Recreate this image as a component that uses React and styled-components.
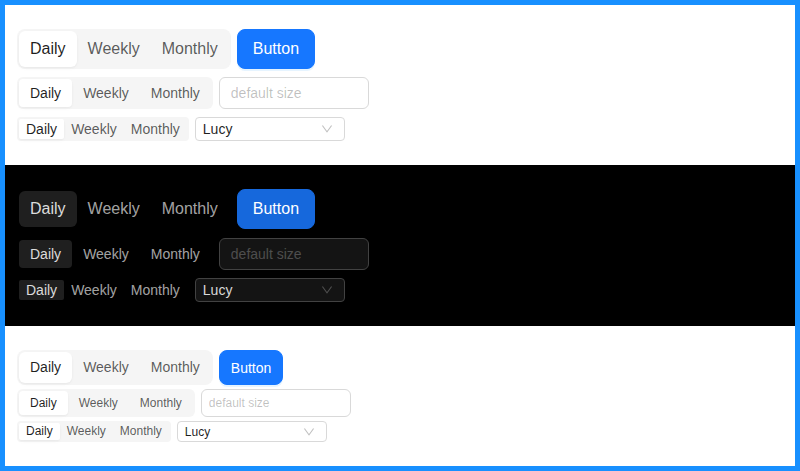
import React, { useState } from "react";
import styled, { createGlobalStyle, ThemeProvider, css } from "styled-components";

const GlobalStyle = createGlobalStyle`
  html, body {
    margin: 0;
    padding: 0;
    background: #ffffff;
  }
  * {
    box-sizing: border-box;
  }
`;

const light = {
  bg: "#ffffff",
  trackBg: "#f5f5f5",
  itemActiveBg: "#ffffff",
  text: "rgba(0, 0, 0, 0.88)",
  textSub: "rgba(0, 0, 0, 0.65)",
  placeholder: "rgba(0, 0, 0, 0.25)",
  border: "#d9d9d9",
  inputBg: "#ffffff",
  primary: "#1677ff",
  btnShadow: "0 2px 0 rgba(5, 145, 255, 0.1)",
  itemShadow:
    "0 1px 2px 0 rgba(0,0,0,0.03), 0 1px 6px -1px rgba(0,0,0,0.02), 0 2px 4px 0 rgba(0,0,0,0.02)",
};

const dark = {
  bg: "#000000",
  trackBg: "#000000",
  itemActiveBg: "#1f1f1f",
  text: "rgba(255, 255, 255, 0.85)",
  textSub: "rgba(255, 255, 255, 0.65)",
  placeholder: "rgba(255, 255, 255, 0.25)",
  border: "#424242",
  inputBg: "#141414",
  primary: "#1668dc",
  btnShadow: "0 2px 0 rgba(0, 0, 0, 0.1)",
  itemShadow: "none",
  firstGap: 9,
};

const normalSizes = {
  rowGap: 8,
  lg: { h: 40, fs: 16, pad: 11, r: 8, ir: 6, btnPad: 15 },
  md: { h: 32, fs: 14, pad: 11, r: 6, ir: 4, inPad: 11 },
  sm: { h: 24, fs: 14, pad: 7, r: 4, ir: 2, inPad: 7 },
};

const compactSizes = {
  rowGap: 4,
  lg: { h: 35, fs: 14, pad: 11, r: 8, ir: 6, btnPad: 11 },
  md: { h: 28, fs: 12, pad: 11, r: 6, ir: 4, inPad: 7 },
  sm: { h: 21, fs: 12, pad: 7, r: 4, ir: 2, inPad: 7 },
};

const Frame = styled.div`
  height: 471px;
  width: 800px;
  border: 5px solid #1890ff;
  display: flex;
  flex-direction: column;
  font-family: "Liberation Sans", Arial, sans-serif;
`;

const Section = styled.section`
  background: ${(p) => p.theme.bg};
  padding: 24px 12px;
  display: flex;
  flex-direction: column;
  gap: ${(p) => p.theme.sizes.rowGap}px;
  ${(p) =>
    p.theme.firstGap &&
    css`
      & > *:first-child {
        margin-bottom: ${p.theme.firstGap - p.theme.sizes.rowGap}px;
      }
    `}
  ${(p) =>
    p.$grow &&
    css`
      flex: 1;
    `}
`;

const Row = styled.div`
  display: flex;
  align-items: center;
  gap: 6px;
`;

const Track = styled.div`
  display: inline-flex;
  padding: 2px;
  background: ${(p) => p.theme.trackBg};
  border-radius: ${(p) => p.theme.sizes[p.$size].r}px;
`;

const Item = styled.div`
  height: ${(p) => p.theme.sizes[p.$size].h - 4}px;
  line-height: ${(p) => p.theme.sizes[p.$size].h - 4}px;
  padding: 0 ${(p) => p.theme.sizes[p.$size].pad}px;
  font-size: ${(p) => p.theme.sizes[p.$size].fs}px;
  border-radius: ${(p) => p.theme.sizes[p.$size].ir}px;
  color: ${(p) => (p.$active ? p.theme.text : p.theme.textSub)};
  background: ${(p) => (p.$active ? p.theme.itemActiveBg : "transparent")};
  box-shadow: ${(p) => (p.$active ? p.theme.itemShadow : "none")};
  cursor: pointer;
  white-space: nowrap;
`;

const PrimaryButton = styled.button`
  height: ${(p) => p.theme.sizes.lg.h}px;
  padding: 0 ${(p) => p.theme.sizes.lg.btnPad}px;
  font-family: inherit;
  font-size: ${(p) => p.theme.sizes.lg.fs}px;
  color: #ffffff;
  background: ${(p) => p.theme.primary};
  border: 1px solid ${(p) => p.theme.primary};
  border-radius: ${(p) => p.theme.sizes.lg.r}px;
  box-shadow: ${(p) => p.theme.btnShadow};
  cursor: pointer;
`;

const TextInput = styled.input`
  width: 150px;
  height: ${(p) => p.theme.sizes.md.h}px;
  padding: 0 ${(p) => p.theme.sizes.md.inPad}px;
  font-family: inherit;
  font-size: ${(p) => p.theme.sizes.md.fs}px;
  color: ${(p) => p.theme.text};
  background: ${(p) => p.theme.inputBg};
  border: 1px solid ${(p) => p.theme.border};
  border-radius: ${(p) => p.theme.sizes.md.r}px;
  outline: none;
  &::placeholder {
    color: ${(p) => p.theme.placeholder};
  }
`;

const SelectBox = styled.div`
  width: 150px;
  height: ${(p) => p.theme.sizes.sm.h}px;
  padding: 0 ${(p) => p.theme.sizes.sm.inPad}px;
  display: flex;
  align-items: center;
  justify-content: space-between;
  font-size: ${(p) => p.theme.sizes.sm.fs}px;
  color: ${(p) => p.theme.text};
  background: ${(p) => p.theme.inputBg};
  border: 1px solid ${(p) => p.theme.border};
  border-radius: ${(p) => p.theme.sizes.sm.r}px;
`;

const Arrow = styled.svg`
  width: 12px;
  height: 12px;
  fill: ${(p) => p.theme.placeholder};
  margin-right: 4px;
`;

const options = ["Daily", "Weekly", "Monthly"];

const Segmented = ({ size }) => {
  const [value, setValue] = useState("Daily");
  return (
    <Track $size={size}>
      {options.map((o) => (
        <Item key={o} $size={size} $active={o === value} onClick={() => setValue(o)}>
          {o}
        </Item>
      ))}
    </Track>
  );
};

const Select = () => (
  <SelectBox>
    <span>Lucy</span>
    <Arrow viewBox="64 64 896 896">
      <path d="M884 256h-75c-5.1 0-9.9 2.5-12.9 6.6L512 654.2 227.9 262.6c-3-4.1-7.8-6.6-12.9-6.6h-75c-6.5 0-10.3 7.4-6.5 12.2l352.6 486.1c12.8 17.6 39 17.6 51.7 0l352.6-486.1c3.9-4.8.1-12.2-6.4-12.2z" />
    </Arrow>
  </SelectBox>
);

const Demo = ({ colors, sizes, grow }) => (
  <ThemeProvider theme={{ ...colors, sizes }}>
    <Section $grow={grow}>
      <Row>
        <Segmented size="lg" />
        <PrimaryButton>Button</PrimaryButton>
      </Row>
      <Row>
        <Segmented size="md" />
        <TextInput placeholder="default size" />
      </Row>
      <Row>
        <Segmented size="sm" />
        <Select />
      </Row>
    </Section>
  </ThemeProvider>
);

export default function App() {
  return (
    <>
      <GlobalStyle />
      <Frame>
        <Demo colors={light} sizes={normalSizes} />
        <Demo colors={dark} sizes={normalSizes} />
        <Demo colors={light} sizes={compactSizes} grow />
      </Frame>
    </>
  );
}
